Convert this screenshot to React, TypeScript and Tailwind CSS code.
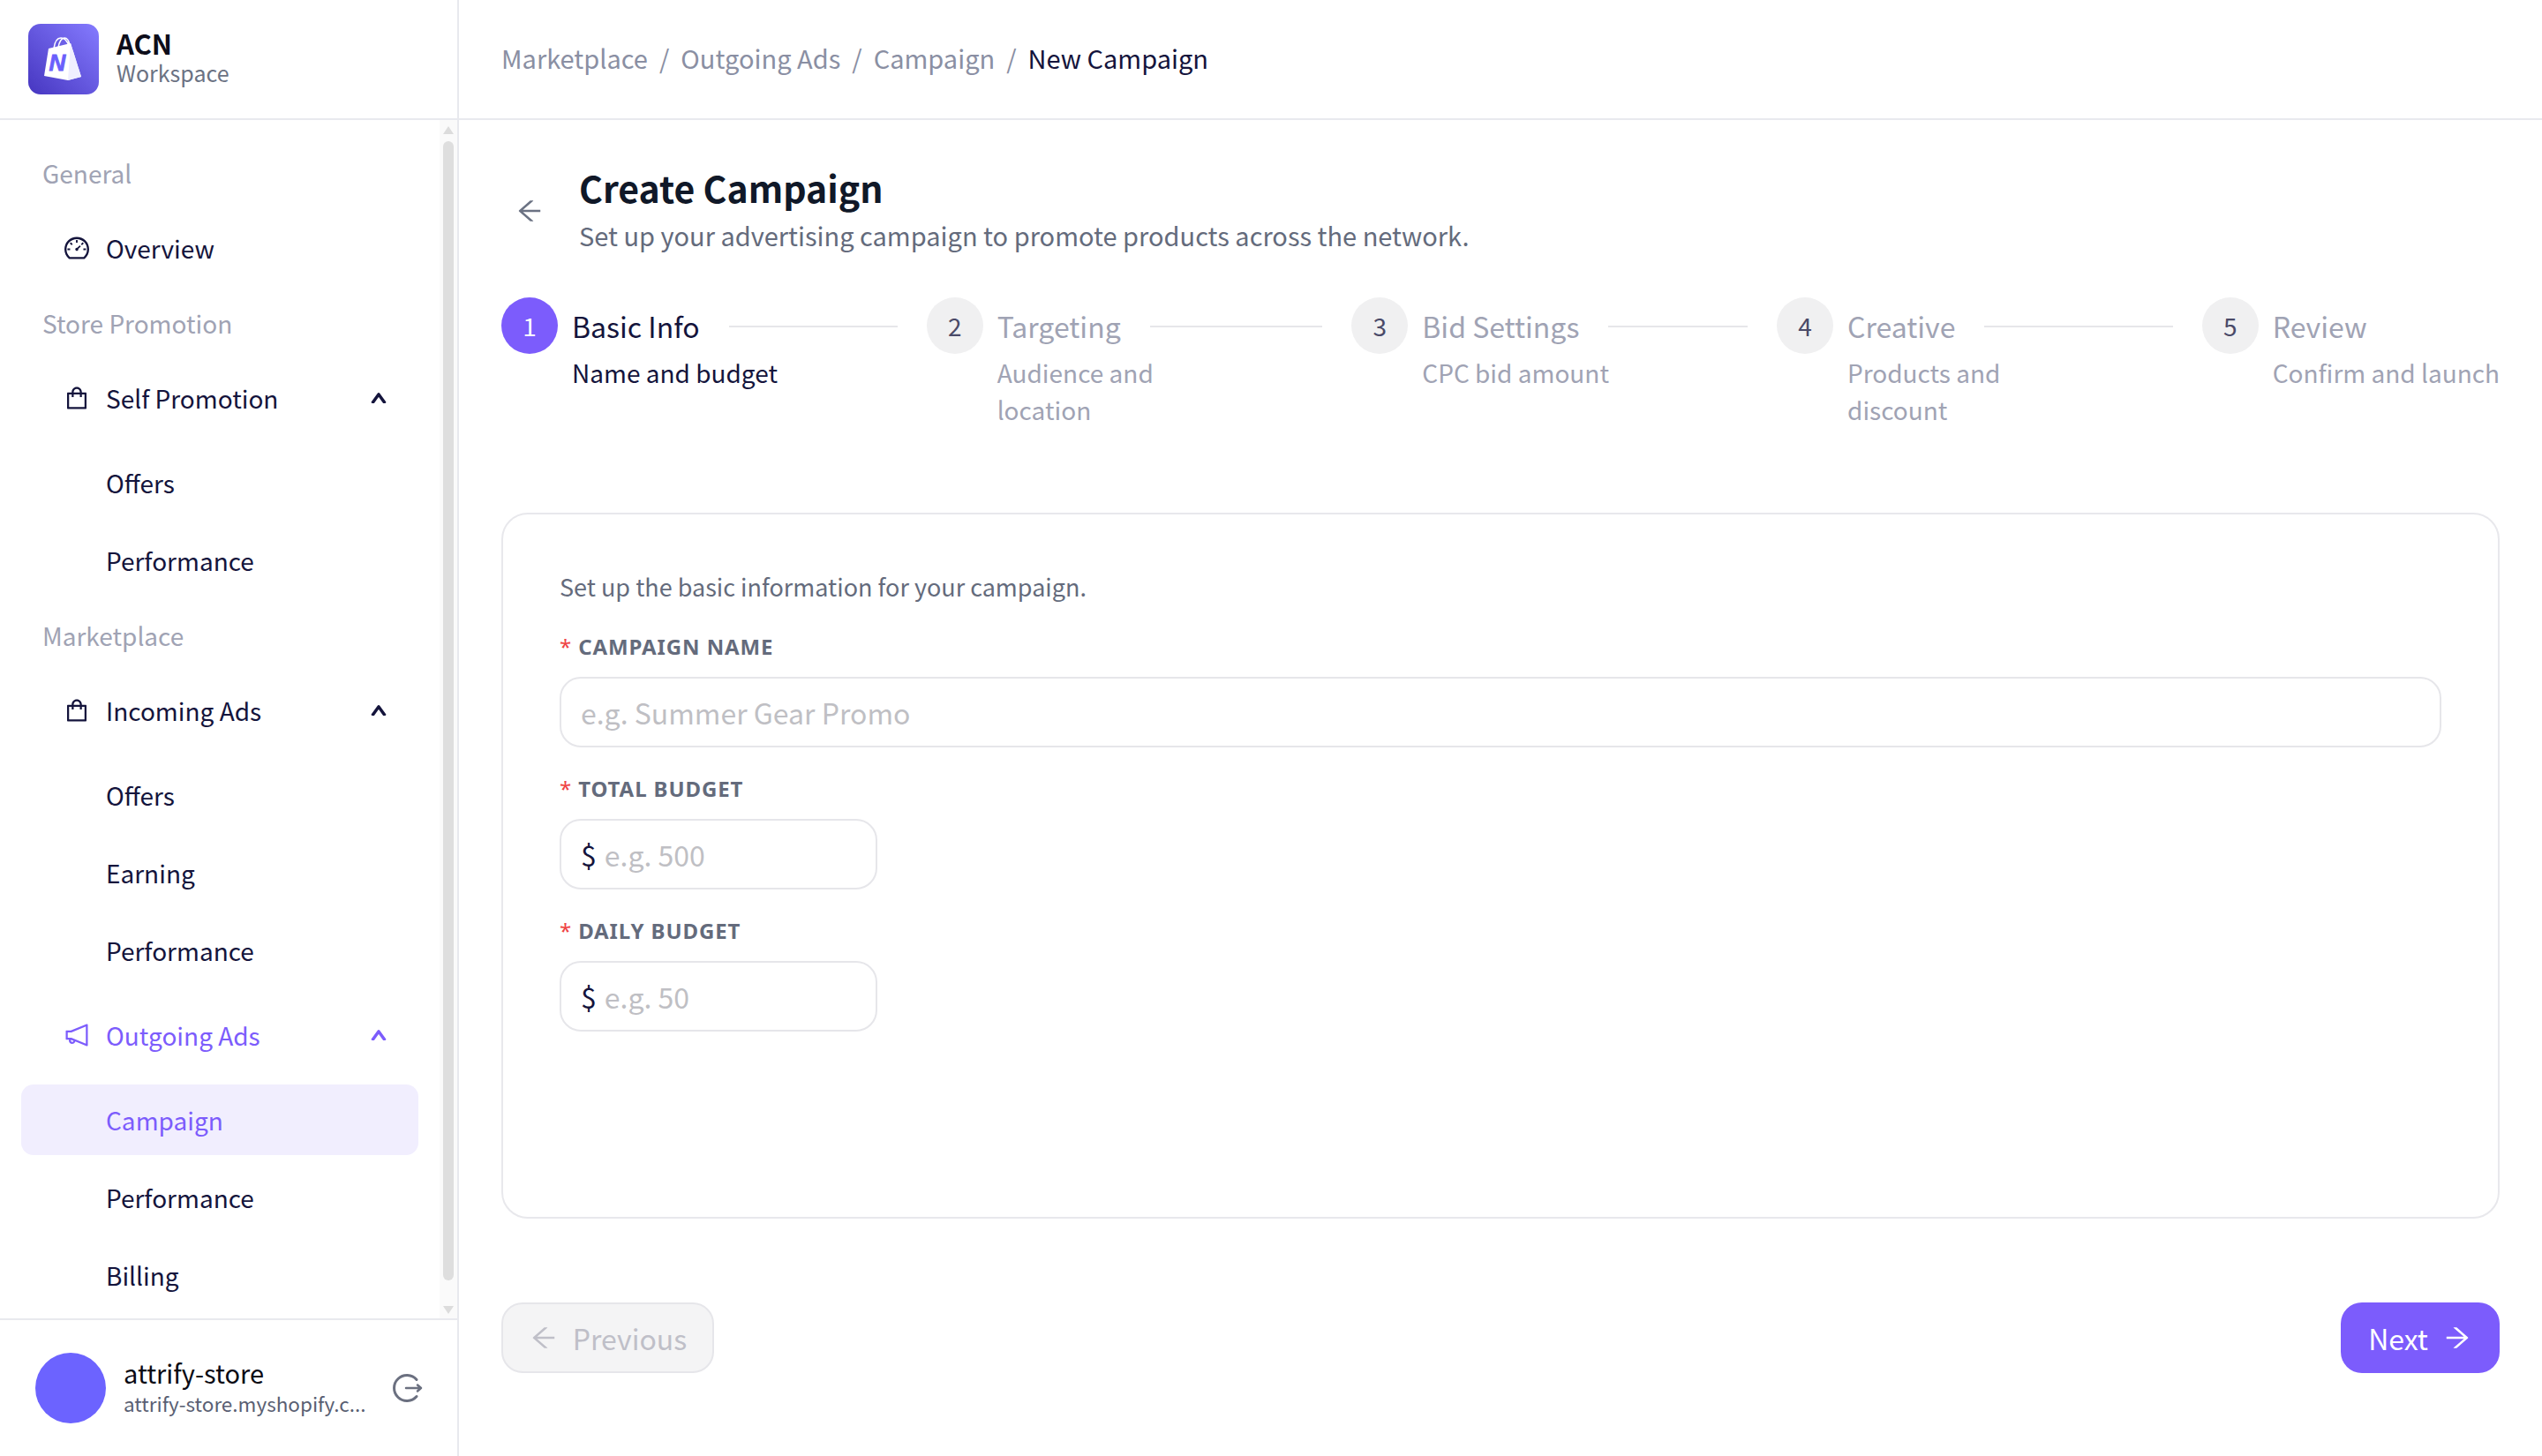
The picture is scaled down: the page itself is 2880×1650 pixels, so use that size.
import React from "react";
import { AiOutlineDashboard, AiOutlineShopping, AiOutlineNotification, AiOutlineArrowLeft, AiOutlineArrowRight, AiOutlineUp } from "react-icons/ai";

function Logo() {
  return (
    <svg width="80" height="80" viewBox="0 0 80 80" className="shrink-0">
      <defs>
        <linearGradient id="lg" x1="0" y1="1" x2="1" y2="0">
          <stop offset="0" stopColor="#4636c0" />
          <stop offset="1" stopColor="#857bff" />
        </linearGradient>
      </defs>
      <rect width="80" height="80" rx="14" fill="url(#lg)" />
      <path d="M29 28c1-8 4-12 8-12s7 3 9 9M34 27c1-7 4-11 7-11s5 3 6 8" stroke="#fff" strokeWidth="1.6" fill="none" />
      <path d="M23 28 L48 22 L60 60 L45 64 L18 59 Z" fill="#fff" />
      <path d="M48 22 L60 60 L45 64 Z" fill="#f0efff" />
      <text x="33" y="53" textAnchor="middle" fontSize="26" fontWeight="900" fontStyle="italic" fontFamily="'Liberation Sans', sans-serif" fill="#6a5ffc" stroke="#6a5ffc" strokeWidth="0.8">N</text>
    </svg>
  );
}

function Label({ children }: { children: React.ReactNode }) {
  return <div className="h-[90px] flex items-center pl-[48px] text-[28px] text-[#a0a3b4]">{children}</div>;
}

function Item({ icon, children, open, active }: { icon?: React.ReactNode; children: React.ReactNode; open?: boolean; active?: boolean }) {
  return (
    <div className={`h-[80px] flex items-center pl-[71px] pr-[59px] text-[28px] ${active ? "text-[#7c5cfc]" : "text-[#14143c]"}`}>
      {icon && <span className="w-[49px] shrink-0 flex justify-start text-[32px]">{icon}</span>}
      <span className="flex-1">{children}</span>
      {open && <AiOutlineUp className="text-[20px]" strokeWidth={100} />}
    </div>
  );
}

function Sub({ children, active }: { children: React.ReactNode; active?: boolean }) {
  return (
    <div className={`h-[80px] flex items-center pl-[96px] text-[28px] rounded-[14px] mx-[24px] ${active ? "bg-[#f1eefe] text-[#7c5cfc]" : "text-[#14143c]"}`}>
      {children}
    </div>
  );
}

function SubList({ children }: { children: React.ReactNode }) {
  return <div className="flex flex-col gap-[8px] mt-[16px]">{children}</div>;
}

function Sidebar() {
  return (
    <aside className="w-[520px] shrink-0 h-full border-r-2 border-[#e8e9ee] flex flex-col">
      <div className="h-[136px] shrink-0 border-b-2 border-[#e8e9ee] flex items-center pl-[32px] gap-[20px]">
        <Logo />
        <div className="flex flex-col gap-[2px] pb-[4px]">
          <span className="text-[31px] leading-[32px] font-bold text-[#0d0d1a]">ACN</span>
          <span className="text-[25px] leading-[30px] text-[#6b7283]">Workspace</span>
        </div>
      </div>
      <div className="flex-1 flex min-h-0">
        <nav className="flex-1 min-w-0 pt-[15px] overflow-hidden">
          <Label>General</Label>
          <Item icon={<AiOutlineDashboard />}>Overview</Item>
          <Label>Store Promotion</Label>
          <Item icon={<AiOutlineShopping />} open>Self Promotion</Item>
          <SubList>
            <Sub>Offers</Sub>
            <Sub>Performance</Sub>
          </SubList>
          <Label>Marketplace</Label>
          <Item icon={<AiOutlineShopping />} open>Incoming Ads</Item>
          <SubList>
            <Sub>Offers</Sub>
            <Sub>Earning</Sub>
            <Sub>Performance</Sub>
          </SubList>
          <div className="mt-[16px]">
            <Item icon={<AiOutlineNotification />} open active>Outgoing Ads</Item>
          </div>
          <SubList>
            <Sub active>Campaign</Sub>
            <Sub>Performance</Sub>
            <Sub>Billing</Sub>
          </SubList>
        </nav>
        <div className="w-[20px] shrink-0 bg-[#fafafa] flex flex-col items-center">
          <div className="mt-[7px] w-0 h-0 border-x-[6px] border-x-transparent border-b-[9px] border-b-[#dcdcdc]" />
          <div className="mt-[8px] w-[12px] h-[1291px] rounded-full bg-[#dedede]" />
          <div className="mt-[29px] w-0 h-0 border-x-[6px] border-x-transparent border-t-[9px] border-t-[#dcdcdc]" />
        </div>
      </div>
      <div className="h-[156px] shrink-0 border-t-2 border-[#e8e9ee] flex items-center pl-[40px] pr-[38px]">
        <div className="w-[80px] h-[80px] rounded-full bg-[#6c63ff] shrink-0" />
        <div className="ml-[20px] flex-1 min-w-0 flex flex-col -mt-[2px]">
          <span className="text-[29px] leading-[36px] text-[#0a0a14]">attrify-store</span>
          <span className="text-[22.5px] leading-[34px] text-[#5a5f73] whitespace-nowrap">attrify-store.myshopify.c...</span>
        </div>
        <svg width="36" height="36" viewBox="0 0 36 36" fill="none" stroke="#6b7080" strokeWidth="3" strokeLinecap="round" strokeLinejoin="round" className="shrink-0">
          <path d="M28 8.5A14.5 14.5 0 1 0 28 27.5" />
          <path d="M16 18H33M29 14.5L33 18L29 21.5" strokeWidth="2.5" />
        </svg>
      </div>
    </aside>
  );
}

const steps = [
  { n: 1, t: "Basic Info", d: "Name and budget" },
  { n: 2, t: "Targeting", d: "Audience and location" },
  { n: 3, t: "Bid Settings", d: "CPC bid amount" },
  { n: 4, t: "Creative", d: "Products and discount" },
  { n: 5, t: "Review", d: "Confirm and launch" },
];

function Stepper() {
  return (
    <div className="flex h-[244px] mt-[42px]">
      {steps.map((s, i) => {
        const cur = i === 0;
        const last = i === steps.length - 1;
        return (
          <div key={s.n} className={`flex gap-[16px] ${last ? "shrink-0" : "flex-1 pr-[33px]"}`}>
            <div className={`w-[64px] h-[64px] rounded-full shrink-0 flex items-center justify-center text-[28px] ${cur ? "bg-[#7c5cfc] text-white" : "bg-[#f0f0f1] text-[#4a4a68]"}`}>{s.n}</div>
            <div className="flex-1 min-w-0">
              <div className="h-[64px] flex items-center gap-[33px]">
                <span className={`text-[32px] whitespace-nowrap ${cur ? "text-[#14143c]" : "text-[#a0a3b4]"}`}>{s.t}</span>
                {!last && <div className="flex-1 h-[2px] bg-[#e6e6ea] mt-[1px]" />}
              </div>
              <div className={`max-w-[268px] text-[28px] leading-[42px] ${cur ? "text-[#14143c]" : "text-[#a0a3b4]"}`}>{s.d}</div>
            </div>
          </div>
        );
      })}
    </div>
  );
}

function FieldLabel({ children }: { children: React.ReactNode }) {
  return (
    <div className="h-[40px] flex items-center text-[24px] font-bold tracking-[0.9px] text-[#646b7c] font-['Noto_Sans',sans-serif]">
      <span className="text-[#ef4444] mr-[7px] font-normal">*</span>
      {children}
    </div>
  );
}

function Input({ placeholder, prefix, wide }: { placeholder: string; prefix?: boolean; wide?: boolean }) {
  return (
    <div className={`h-[80px] mt-[14px] border-2 border-[#e6e6ea] rounded-[24px] flex items-center pl-[22px] text-[32px] ${wide ? "w-full" : "w-[360px]"}`}>
      {prefix && <span className="text-[#14143c] mr-[9px]">$</span>}
      <span className="text-[#bfbfc4]">{placeholder}</span>
    </div>
  );
}

function Main() {
  return (
    <main className="flex-1 min-w-0 flex flex-col">
      <div className="h-[136px] shrink-0 border-b-2 border-[#e8e9ee] flex items-center pl-[48px] pb-[2px] text-[29px] gap-[13px] text-[#8a8fa3]">
        <span>Marketplace</span><span>/</span><span>Outgoing Ads</span><span>/</span><span>Campaign</span><span>/</span>
        <span className="text-[#14143c]">New Campaign</span>
      </div>
      <div className="flex-1 px-[48px] flex flex-col">
        <div className="flex items-center mt-[37px] h-[122px]">
          <AiOutlineArrowLeft className="text-[34px] text-[#6b7283] ml-[15px] mr-[39px] mt-[10px]" />
          <div className="flex flex-col">
            <span className="text-[41px] leading-[64px] font-bold text-[#101828]">Create Campaign</span>
            <span className="text-[29px] leading-[44px] text-[#646b7c]">Set up your advertising campaign to promote products across the network.</span>
          </div>
        </div>
        <Stepper />
        <div className="h-[800px] border-2 border-[#e8e8ec] rounded-[30px] px-[64px] pt-[62px]">
          <div className="text-[27px] leading-[40px] text-[#646b7c]">Set up the basic information for your campaign.</div>
          <div className="mt-[28px]"><FieldLabel>CAMPAIGN NAME</FieldLabel><Input wide placeholder="e.g. Summer Gear Promo" /></div>
          <div className="mt-[27px]"><FieldLabel>TOTAL BUDGET</FieldLabel><Input prefix placeholder="e.g. 500" /></div>
          <div className="mt-[27px]"><FieldLabel>DAILY BUDGET</FieldLabel><Input prefix placeholder="e.g. 50" /></div>
        </div>
        <div className="mt-[95px] flex justify-between">
          <div className="h-[80px] w-[241px] rounded-[24px] border-2 border-[#e6e6ea] bg-[#f4f4f5] flex items-center justify-center gap-[16px] text-[32px] text-[#bfbfc8]">
            <AiOutlineArrowLeft className="text-[34px]" />Previous
          </div>
          <div className="h-[80px] w-[180px] rounded-[24px] bg-[#7c5cfc] flex items-center justify-center gap-[16px] text-[32px] text-white">
            Next<AiOutlineArrowRight className="text-[34px]" />
          </div>
        </div>
      </div>
    </main>
  );
}

export default function App() {
  return (
    <div className="w-[2880px] h-[1650px] flex bg-white overflow-hidden font-['Noto_Sans_CJK_SC',sans-serif]">
      <Sidebar />
      <Main />
    </div>
  );
}
